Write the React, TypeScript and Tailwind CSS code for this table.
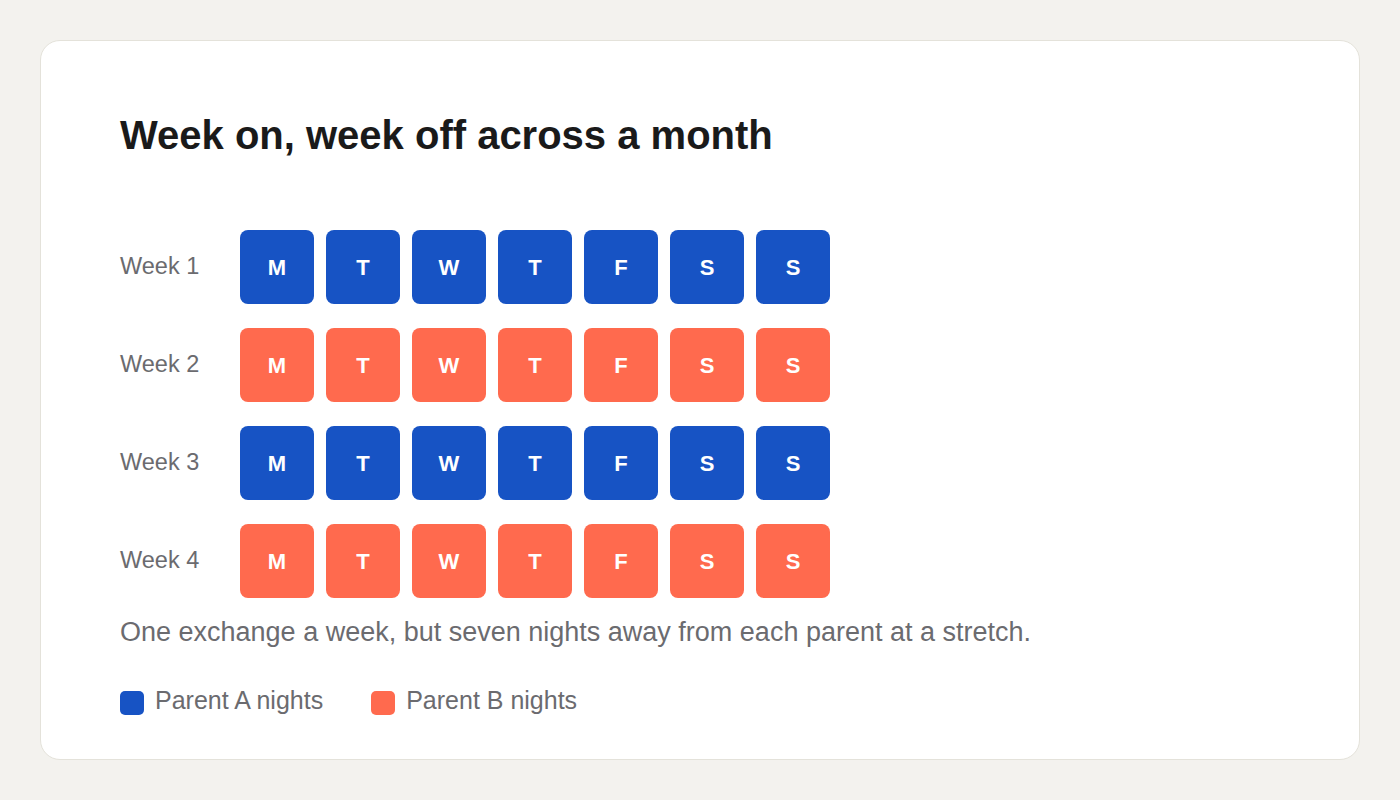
const days = ['M', 'T', 'W', 'T', 'F', 'S', 'S']

const weeks = [
  { label: 'Week 1', parent: 'A' },
  { label: 'Week 2', parent: 'B' },
  { label: 'Week 3', parent: 'A' },
  { label: 'Week 4', parent: 'B' },
]

function DayCell({ day, parent }: { day: string; parent: string }) {
  return (
    <div
      className={
        parent === 'A'
          ? 'w-[74px] h-[74px] rounded-lg bg-[#1753c4] flex items-center justify-center text-white font-bold text-[22px]'
          : 'w-[74px] h-[74px] rounded-lg bg-[#ff6a4e] flex items-center justify-center text-white font-bold text-[22px]'
      }
    >
      {day}
    </div>
  )
}

function LegendItem({ color, label }: { color: string; label: string }) {
  return (
    <div className="flex items-start">
      <span className={`w-6 h-6 mt-[5px] rounded-[5px] ${color}`} />
      <span className="ml-[11px] text-[25px] leading-[28px] text-[#6b6b6f]">{label}</span>
    </div>
  )
}

export default function App() {
  return (
    <div className="min-h-screen bg-[#f3f2ee] p-10 font-['Liberation_Sans',Arial,sans-serif]">
      <div className="bg-white border border-[#e4e2da] rounded-[20px] pl-[79px] pr-10 pt-[70px] pb-[44px]">
        <h1 className="text-[40px] leading-[48px] font-bold text-[#1a1a1a]">
          Week on, week off across a month
        </h1>

        <div className="mt-[71px] flex flex-col gap-6">
          {weeks.map((w) => (
            <div key={w.label} className="flex items-center">
              <div className="w-[120px] text-[23.5px] text-[#6b6b6f]">{w.label}</div>
              <div className="flex gap-3">
                {days.map((d, i) => (
                  <DayCell key={i} day={d} parent={w.parent} />
                ))}
              </div>
            </div>
          ))}
        </div>

        <p className="mt-[16px] text-[27px] leading-[36px] text-[#6b6b6f]">
          One exchange a week, but seven nights away from each parent at a stretch.
        </p>

        <div className="mt-[36px] flex gap-12">
          <LegendItem color="bg-[#1753c4]" label="Parent A nights" />
          <LegendItem color="bg-[#ff6a4e]" label="Parent B nights" />
        </div>
      </div>
    </div>
  )
}
